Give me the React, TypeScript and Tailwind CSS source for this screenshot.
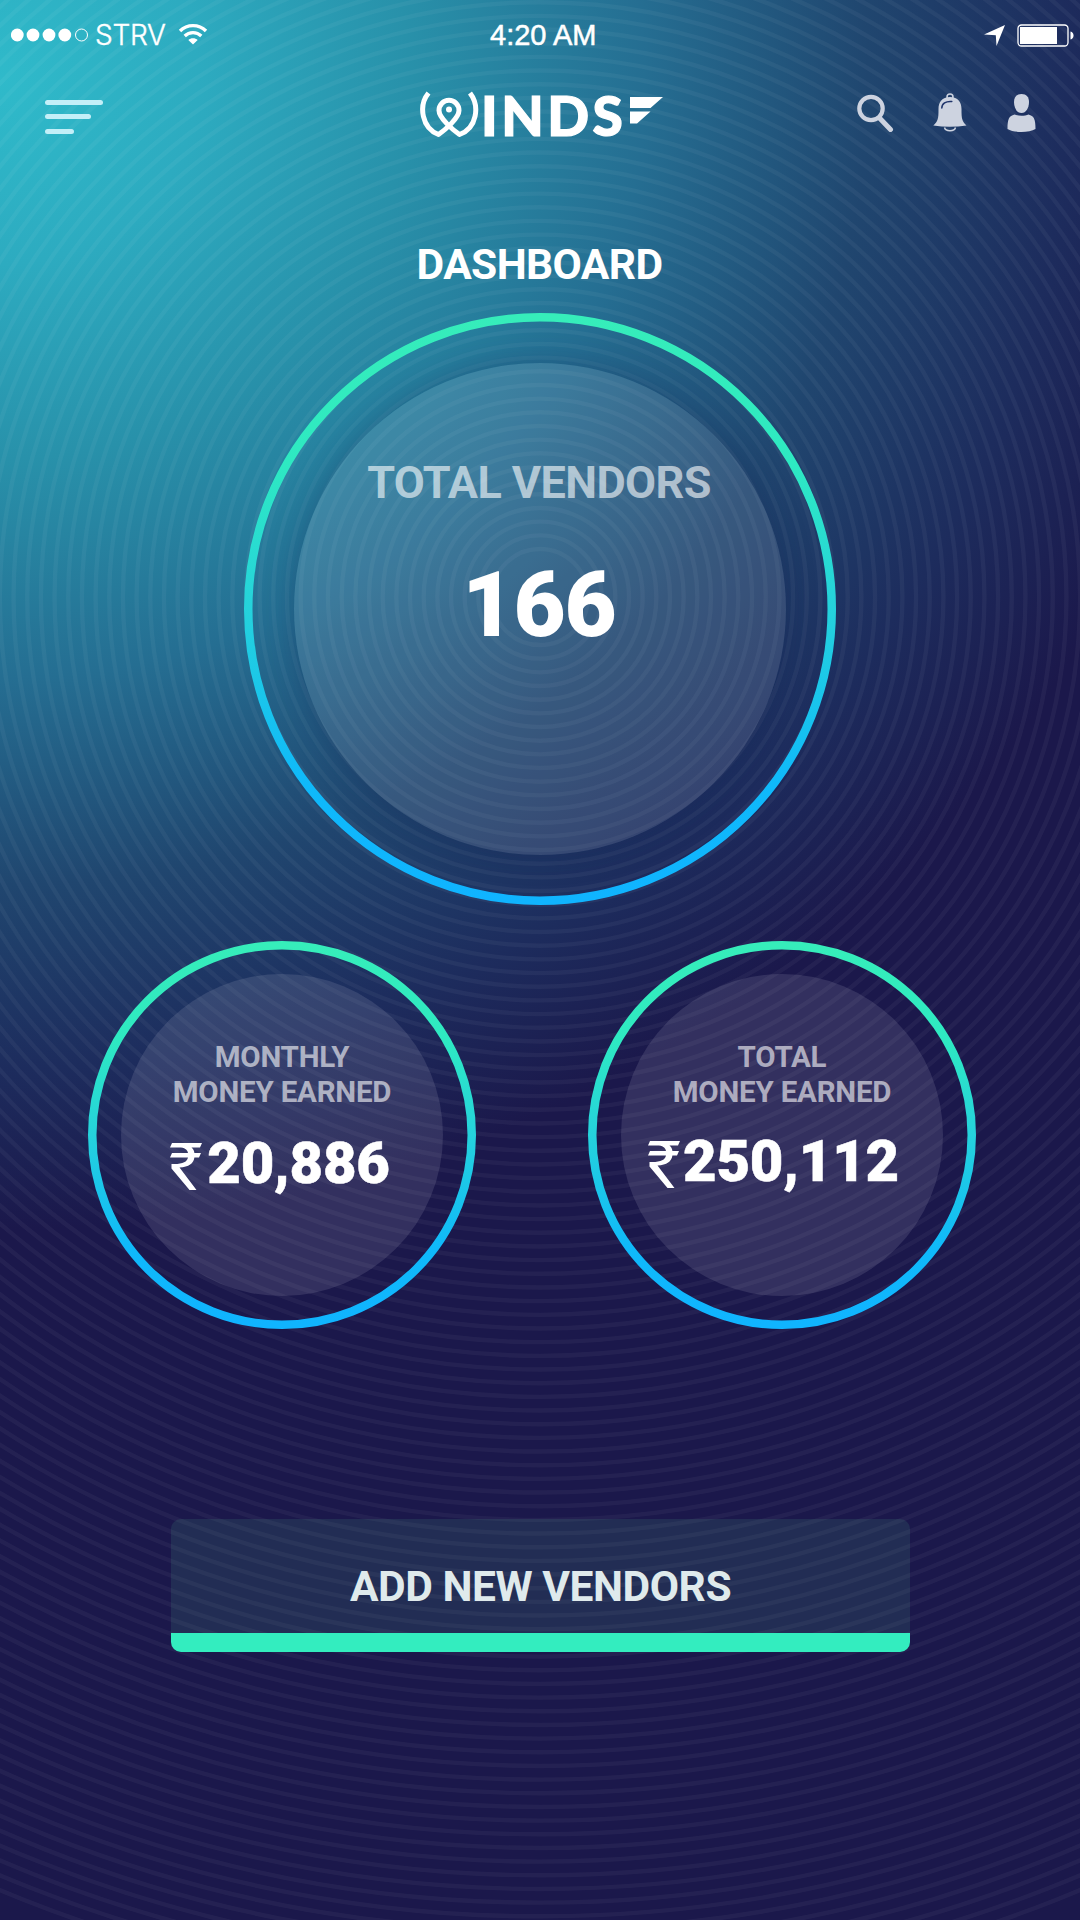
import React from "react";

const RINGS = Array.from({ length: 100 }, (_, i) => 48 + i * 13.67);

function Backdrop() {
  return (
    <div className="absolute inset-0 -z-10 overflow-hidden bg-[#1b184b]">
      <div className="absolute inset-0 bg-[radial-gradient(ellipse_1240px_1150px_at_0px_80px,#2fbaca_0%,#2dabc0_16%,#2891aa_33%,#256e92_52%,#20466f_70%,#1d2c5d_86%,#1b184b_100%)]" />
      <svg className="absolute inset-0" width="1080" height="1920" fill="none" stroke="#ffffff" strokeOpacity="0.042" strokeWidth="4.4">
        {RINGS.map((r) => (
          <circle key={r} cx="540" cy="597" r={r} />
        ))}
      </svg>
    </div>
  );
}

function StatusBar() {
  return (
    <div className="relative flex h-[70px] w-full items-center justify-between text-white">
      <div className="flex items-center pl-[11px]">
        <svg width="78" height="14" viewBox="0 0 78 14" fill="#fff">
          <circle cx="6.3" cy="7" r="6.4" />
          <circle cx="22" cy="7" r="6.4" />
          <circle cx="38" cy="7" r="6.4" />
          <circle cx="53.8" cy="7" r="6.4" />
          <circle cx="70.5" cy="7" r="6" fill="none" stroke="#fff" />
        </svg>
        <span className="ml-[6px] font-['Inter','Liberation_Sans',sans-serif] text-[28px] font-light leading-none tracking-[-0.3px] [-webkit-text-stroke:0.4px_#fff]">STRV</span>
        <svg className="-mt-[3px] ml-[13px]" width="30" height="22" viewBox="0 0 30 22" fill="none" stroke="#fff">
          <path d="M2 8a18.3 18.3 0 0 1 26 0" strokeWidth="3.4" />
          <path d="M6.7 13a11.7 11.7 0 0 1 16.6 0" strokeWidth="3.2" />
          <path d="M10.3 17c2.5-2.4 6.900-2.400 9.400 0L15 21.500Z" fill="#fff" stroke="none" />
        </svg>
      </div>
      <span className="absolute left-[490px] font-['Liberation_Sans',sans-serif] text-[29px] leading-none [-webkit-text-stroke:0.5px_#fff]">4:20 AM</span>
      <div className="flex items-center gap-[12px] pr-[6px]">
        <svg width="21" height="21" viewBox="0 0 21 21" fill="#fff">
          <path d="M21 0 12.500 21 11.800 10.200 0 9.400Z" />
        </svg>
        <svg width="57" height="23" viewBox="0 0 57 23">
          <rect x="1" y="1" width="50" height="21" rx="3.500" fill="none" stroke="#fff" strokeWidth="1.300" />
          <path d="M3 3h37v17H3Z" fill="#fff" />
          <path d="M53.500 7.500c4 .5 4 7.500 0 8Z" fill="#fff" />
        </svg>
      </div>
    </div>
  );
}

function Logo() {
  return (
    <div className="flex items-start">
      <svg width="60" height="48" viewBox="0 0 60 48" fill="none" stroke="#fff" strokeWidth="5">
        <path d="M9.500 2C-1 15 3 37 19.500 43.500C26 39 40 27 40 19.500A10 10.300 0 0 0 20 19.500C20 27 34 39 40.500 43.500C58 37 61 15 51 2" strokeLinejoin="round" />
        <circle cx="30" cy="18.500" r="3" fill="#fff" stroke="none" />
      </svg>
      <span className="-mt-[1px] ml-[2px] w-[149px] font-['Lato',sans-serif] text-[55px] font-black leading-[50px] tracking-[3.500px] text-white [-webkit-text-stroke:1.200px_#fff]">INDS</span>
      <svg className="mt-[6px]" width="33" height="27" viewBox="0 0 33 27" fill="#fff">
        <path d="M0 0h33L20.500 11H0ZM0 14.500h20.500L7 26.500H0Z" />
      </svg>
    </div>
  );
}

function Header() {
  return (
    <header className="relative h-[160px]">
      <div className="flex flex-col items-start gap-[9px] pl-[45px] pt-[30px]">
        <div className="h-[5px] w-[58px] rounded-full bg-[#c3eff8]" />
        <div className="h-[5px] w-[46px] rounded-full bg-[#c3eff8]" />
        <div className="mt-px h-[5px] w-[29px] rounded-full bg-[#c3eff8]" />
      </div>
      <div className="absolute left-[419px] top-[21px]">
        <Logo />
      </div>
      <div className="absolute left-[856px] top-[22px] flex items-start">
        <svg width="38" height="40" viewBox="0 0 38 40" fill="none" stroke="#cdd3e0">
          <circle cx="15" cy="16.500" r="11.700" strokeWidth="4.200" />
          <path d="m23.500 26 11 11.500" strokeWidth="5" strokeLinecap="round" />
        </svg>
        <svg className="ml-[39px]" width="34" height="40" viewBox="0 0 34 40" fill="#cdd3e0">
          <circle cx="17" cy="5" r="3" fill="none" stroke="#cdd3e0" strokeWidth="1.500" />
          <path d="M17 5C9 5 5.500 10 5.500 17C5.500 27 5 29 .3 33.500Q17 36 33.500 33.500C29 29 28.500 27 28.500 17C28.500 10 25 5 17 5Z" />
          <path d="M11.500 35.500c1 4.300 10 4.300 11 0" fill="none" stroke="#cdd3e0" strokeWidth="1.500" />
          <path d="M8.800 16c0-4.500 4-7 10-6.500" fill="none" stroke="#20356b" strokeWidth="1.500" strokeLinecap="round" />
        </svg>
        <svg className="ml-[40px]" width="29" height="40" viewBox="0 0 29 40" fill="#cdd3e0">
          <path d="M14.500 2C19.500 2 22 5 22 10C22 16 19 21 14.500 21S7 16 7 10C7 5 9.500 2 14.500 2Z" />
          <path d="M7.500 22.500c3.500 1.700 10.500 1.700 14 0C27 24 28.500 27 28.500 37C22 41 7 41 .5 37C.5 27 2 24 7.500 22.500Z" />
        </svg>
      </div>
    </header>
  );
}

function Rupee({ className }: { className?: string }) {
  return (
    <svg className={className} width="32" height="48" viewBox="0 0 32 48" fill="#fff">
      <path d="M2 0h30l-2 4.500h-8.500c2 1.500 2.500 3 2.900 5.500H31l-2 4.500h-4.600C23.500 20.500 19 24 9.500 24.500l17 22.500h-7L1.500 25.500v-4.500c11 .5 15.500-2 16.500-6.500H0l2-4.500h16C17.500 6.500 14.500 4.500 9 4.500H0Z" />
    </svg>
  );
}

function Dial({ diameter, size, inner, children }: { diameter: number; size: string; inner: string; children: React.ReactNode }) {
  return (
    <div className={`relative flex items-center justify-center ${size}`}>
      <svg className="absolute inset-0 h-full w-full">
        <defs>
          <linearGradient id="dial" x1="0" y1="0" x2="0" y2="1">
            <stop offset="0" stopColor="#36edba" />
            <stop offset="0.25" stopColor="#2ee9c2" />
            <stop offset="0.5" stopColor="#25d2dc" />
            <stop offset="0.8" stopColor="#0fb9fa" />
            <stop offset="1" stopColor="#10b4ff" />
          </linearGradient>
        </defs>
        <circle cx={diameter / 2} cy={diameter / 2} r={diameter / 2 - 4.25} fill="none" stroke="url(#dial)" strokeWidth="8.500" />
      </svg>
      <div className={`relative flex flex-col items-center rounded-full bg-[#dcdcea]/13 ${inner}`}>{children}</div>
    </div>
  );
}

export default function App() {
  return (
    <main className="relative isolate flex h-[1920px] w-[1080px] flex-col overflow-hidden font-['Roboto',sans-serif]">
      <Backdrop />
      <StatusBar />
      <Header />
      <h1 className="w-full pr-px text-center text-[42.500px] font-bold leading-[70px] tracking-[-0.600px] text-white">DASHBOARD</h1>

      <section className="mt-[13px] flex justify-center">
        <Dial diameter={592} size="size-[592px]" inner="size-[492px] shadow-[0_0_30px_rgba(18,30,80,0.3)]">
          <p className="mt-[93px] pr-[2px] text-[45px] font-bold leading-[54px] tracking-[-0.600px] text-white/60">TOTAL VENDORS</p>
          <p className="mt-[46px] pr-[2px] text-[90px] font-black leading-[100px] tracking-[-1px] text-white">166</p>
        </Dial>
      </section>

      <section className="mt-[36px] flex gap-[112px] pl-[88px]">
        <Dial diameter={388} size="size-[388px]" inner="size-[322px]">
          <p className="mt-[66px] text-center text-[29.500px] font-bold leading-[35px] tracking-[-0.200px] text-white/60">
            MONTHLY
            <br />
            MONEY EARNED
          </p>
          <p className="mt-[18px] flex items-start pr-[4px] text-[58px] font-black leading-[70px] tracking-[-0.200px] text-white">
            <Rupee className="mr-[5px] mt-[15px]" />
            <span className="[-webkit-text-stroke:0.500px_#fff]">20,886</span>
          </p>
        </Dial>
        <Dial diameter={388} size="size-[388px]" inner="size-[322px]">
          <p className="mt-[66px] text-center text-[29.500px] font-bold leading-[35px] tracking-[-0.200px] text-white/60">
            TOTAL
            <br />
            MONEY EARNED
          </p>
          <p className="mt-[16px] flex items-start pr-[17px] text-[58px] font-black leading-[70px] tracking-[-0.200px] text-white">
            <Rupee className="mr-[3px] mt-[15px]" />
            <span className="[-webkit-text-stroke:0.500px_#fff]">250,112</span>
          </p>
        </Dial>
      </section>

      <button className="ml-[171px] mt-[190px] flex h-[133px] w-[739px] flex-col overflow-hidden rounded-[10px] bg-[#61eaa5]/10">
        <span className="flex w-full flex-1 items-center justify-center pt-[22px] text-[42.500px] font-bold tracking-[-0.450px] text-[#dfeaec]">ADD NEW VENDORS</span>
        <span className="h-[19px] w-full bg-[#33edbf]" />
      </button>
    </main>
  );
}
